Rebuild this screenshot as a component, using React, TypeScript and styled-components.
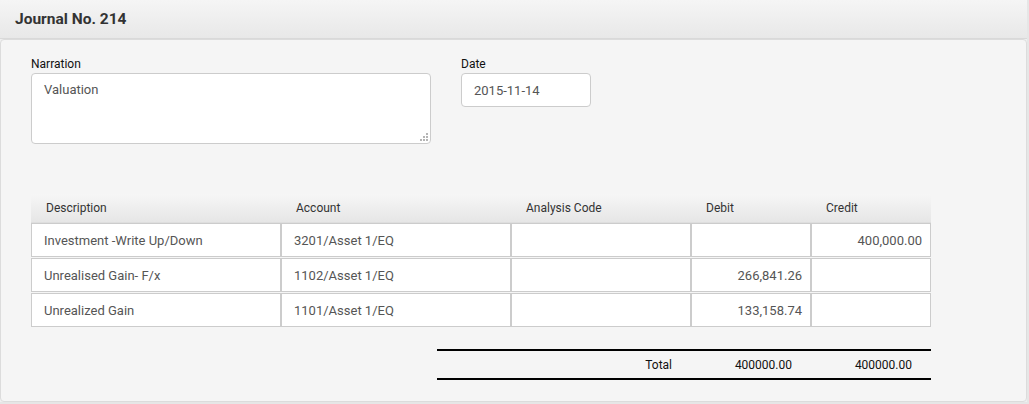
import React from "react";
import styled, { createGlobalStyle } from "styled-components";

const Global = createGlobalStyle`
  html, body { margin: 0; padding: 0; }
  body {
    background: #e6e6e6;
    font-family: Roboto, "Liberation Sans", Arial, sans-serif;
    width: 1029px;
    height: 404px;
    overflow: hidden;
  }
  * { box-sizing: border-box; }
`;

const Card = styled.div`
  width: 1027px;
  display: flex;
  flex-direction: column;
  background: #f0f0f0;
`;

const Header = styled.div`
  height: 39px;
  padding: 0 15px;
  display: flex;
  align-items: center;
  background: linear-gradient(to bottom, #f5f5f5 0%, #e8e8e8 100%);
  border-bottom: 1px solid #d9d9d9;
`;

const Title = styled.h3`
  margin: 0;
  font-size: 15.5px;
  font-weight: 700;
  color: #333;
  padding-bottom: 1px;
`;

const Panel = styled.div`
  height: 363px;
  background: #f5f5f5;
  border: 1px solid #dcdcdc;
  border-radius: 4px;
  padding: 16px 30px 0 30px;
  display: flex;
  flex-direction: column;
`;

const FormRow = styled.div`
  display: flex;
  gap: 30px;
`;

const Field = styled.div<{ $w: number }>`
  width: ${(p) => p.$w}px;
  display: flex;
  flex-direction: column;
`;

const Label = styled.label`
  font-size: 12px;
  line-height: 17px;
  color: #111;
`;

const AreaWrap = styled.div`
  position: relative;
  height: 71px;
`;

const TextArea = styled.div`
  height: 71px;
  background: #fff;
  border: 1px solid #ccc;
  border-radius: 4px;
  padding: 7px 12px;
  font-size: 13px;
  line-height: 18px;
  color: #555;
`;

const Grip = styled.svg`
  position: absolute;
  right: 3px;
  bottom: 3px;
`;

const Input = styled.div`
  height: 34px;
  background: #fff;
  border: 1px solid #ccc;
  border-radius: 4px;
  padding: 0 12px;
  display: flex;
  align-items: center;
  font-size: 13px;
  color: #555;
`;

const COLS = "250px 230px 180px 120px 120px";

const Table = styled.div`
  width: 900px;
  margin-top: 50px;
  display: flex;
  flex-direction: column;
`;

const HeadRow = styled.div`
  display: grid;
  grid-template-columns: ${COLS};
  height: 29px;
  background: linear-gradient(to bottom, #f6f6f6 0%, #e6e6e6 100%);
  border-bottom: 1px solid #dedede;
`;

const HeadCell = styled.div`
  display: flex;
  align-items: center;
  padding-left: 15px;
  font-size: 12px;
  color: #333;
`;

const Body = styled.div`
  display: flex;
  flex-direction: column;
  gap: 1px;
`;

const Row = styled.div`
  display: grid;
  grid-template-columns: ${COLS};
  height: 34px;
`;

const Cell = styled.div<{ $right?: boolean }>`
  background: #fff;
  border: 1px solid #ccc;
  display: flex;
  align-items: center;
  justify-content: ${(p) => (p.$right ? "flex-end" : "flex-start")};
  padding: 0 8px 0 12px;
  font-size: 13px;
  color: #555;
`;

const TotalsWrap = styled.div`
  width: 900px;
  display: flex;
  justify-content: flex-end;
  margin-top: 22px;
`;

const Totals = styled.div`
  display: grid;
  grid-template-columns: 74px 180px 120px 120px;
  height: 31px;
  border-top: 2px solid #000;
  border-bottom: 2px solid #000;
`;

const TotalCell = styled.div`
  display: flex;
  align-items: center;
  justify-content: flex-end;
  padding-right: 19px;
  font-size: 12px;
  color: #111;
`;

const rows = [
  { desc: "Investment -Write Up/Down", acct: "3201/Asset 1/EQ", code: "", debit: "", credit: "400,000.00" },
  { desc: "Unrealised Gain- F/x", acct: "1102/Asset 1/EQ", code: "", debit: "266,841.26", credit: "" },
  { desc: "Unrealized Gain", acct: "1101/Asset 1/EQ", code: "", debit: "133,158.74", credit: "" },
];

export default function App() {
  return (
    <>
      <Global />
      <Card>
        <Header>
          <Title>Journal No. 214</Title>
        </Header>
        <Panel>
          <FormRow>
            <Field $w={400}>
              <Label>Narration</Label>
              <AreaWrap>
                <TextArea>Valuation</TextArea>
                <Grip width="8" height="8" viewBox="0 0 8 8">
                  <rect x="6" y="0" width="2" height="2" fill="#b5b5b5" />
                  <rect x="3" y="3" width="2" height="2" fill="#b5b5b5" />
                  <rect x="6" y="3" width="2" height="2" fill="#b5b5b5" />
                  <rect x="0" y="6" width="2" height="2" fill="#b5b5b5" />
                  <rect x="3" y="6" width="2" height="2" fill="#b5b5b5" />
                  <rect x="6" y="6" width="2" height="2" fill="#b5b5b5" />
                </Grip>
              </AreaWrap>
            </Field>
            <Field $w={130}>
              <Label>Date</Label>
              <Input>2015-11-14</Input>
            </Field>
          </FormRow>

          <Table>
            <HeadRow>
              <HeadCell>Description</HeadCell>
              <HeadCell>Account</HeadCell>
              <HeadCell>Analysis Code</HeadCell>
              <HeadCell>Debit</HeadCell>
              <HeadCell>Credit</HeadCell>
            </HeadRow>
            <Body>
              {rows.map((r) => (
                <Row key={r.desc}>
                  <Cell>{r.desc}</Cell>
                  <Cell>{r.acct}</Cell>
                  <Cell>{r.code}</Cell>
                  <Cell $right>{r.debit}</Cell>
                  <Cell $right>{r.credit}</Cell>
                </Row>
              ))}
            </Body>
          </Table>

          <TotalsWrap>
            <Totals>
              <TotalCell />
              <TotalCell>Total</TotalCell>
              <TotalCell>400000.00</TotalCell>
              <TotalCell>400000.00</TotalCell>
            </Totals>
          </TotalsWrap>
        </Panel>
      </Card>
    </>
  );
}
